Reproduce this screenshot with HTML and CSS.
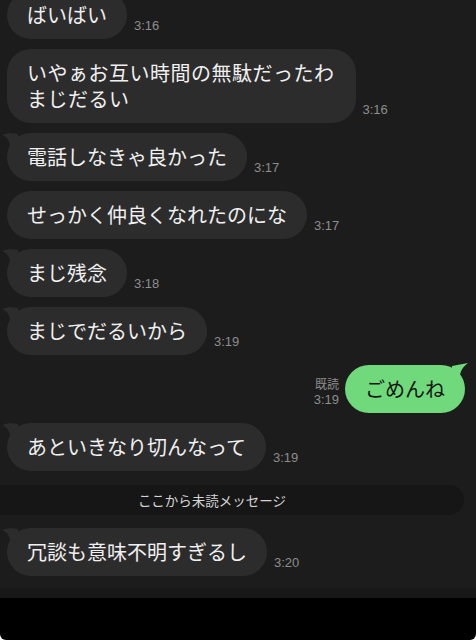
FILE: index.html
```html
<!DOCTYPE html>
<html lang="ja">
<head>
<meta charset="utf-8">
<title>トーク</title>
<link rel="stylesheet" href="styles.css">
</head>
<body>
<div class="screen">
  <div class="chat">
    <div class="row first">
      <div class="bubble">ばいばい</div>
      <div class="meta"><span class="time">3:16</span></div>
    </div>
    <div class="row">
      <div class="bubble wide"><span class="line">いやぁお互い時間の無駄だったわ</span><span class="line">まじだるい</span></div>
      <div class="meta"><span class="time">3:16</span></div>
    </div>
    <div class="row">
      <div class="bubble tail">電話しなきゃ良かった</div>
      <div class="meta"><span class="time">3:17</span></div>
    </div>
    <div class="row">
      <div class="bubble">せっかく仲良くなれたのにな</div>
      <div class="meta"><span class="time">3:17</span></div>
    </div>
    <div class="row">
      <div class="bubble tail">まじ残念</div>
      <div class="meta"><span class="time">3:18</span></div>
    </div>
    <div class="row">
      <div class="bubble tail">まじでだるいから</div>
      <div class="meta"><span class="time">3:19</span></div>
    </div>
    <div class="row mine">
      <div class="meta right"><span class="time">既読</span><span class="time">3:19</span></div>
      <div class="bubble green">ごめんね</div>
    </div>
    <div class="row">
      <div class="bubble tail">あといきなり切んなって</div>
      <div class="meta"><span class="time">3:19</span></div>
    </div>
    <div class="divider">ここから未読メッセージ</div>
    <div class="row">
      <div class="bubble tail">冗談も意味不明すぎるし</div>
      <div class="meta"><span class="time">3:20</span></div>
    </div>
  </div>
  <div class="band"></div>
</div>
</body>
</html>
```
FILE: styles.css
```css
html, body {
  margin: 0;
  padding: 0;
  background: #ffffff;
}

.screen {
  width: 476px;
  height: 640px;
  background: #000000;
  border-radius: 0 0 6px 6px;
  overflow: hidden;
  font-family: "Noto Sans CJK JP", "Liberation Sans", sans-serif;
}

.chat {
  height: 588px;
  background: #1c1c1c;
  overflow: hidden;
  display: flex;
  flex-direction: column;
  gap: 10px;
}

.band {
  height: 10px;
  background: #181818;
}

.row {
  display: flex;
  align-items: flex-end;
  gap: 7px;
  padding-left: 7px;
}

.row.first {
  margin-top: -9px;
}

.row.mine {
  justify-content: flex-end;
  padding-left: 0;
  padding-right: 11px;
  gap: 6px;
}

.bubble {
  position: relative;
  background: #2c2c2c;
  color: #f0f0f0;
  font-size: 20px;
  line-height: 26px;
  padding: 11px 20px;
  border-radius: 24px;
  white-space: nowrap;
}

.bubble.wide {
  display: flex;
  flex-direction: column;
  letter-spacing: 0.5px;
  padding-right: 21px;
}

.line {
  display: block;
  height: 26px;
  line-height: 26px;
}

.bubble.tail::before {
  content: "";
  position: absolute;
  left: -5px;
  top: 0;
  width: 16px;
  height: 14px;
  background: #2c2c2c;
  clip-path: path("M0 2 C5 0 11 0 16 1 L16 14 L8 14 C8 8 5 4 0 2 Z");
}

.bubble.green {
  background: #6fd97b;
  color: #161616;
}

.bubble.green::before {
  content: "";
  position: absolute;
  right: -3px;
  top: -2px;
  width: 16px;
  height: 14px;
  background: #6fd97b;
  clip-path: path("M16 0 C11 1 5 2 0 3 L0 14 L8 14 C8 8 11 4 16 0 Z");
}

.meta {
  display: flex;
  flex-direction: column;
  padding-bottom: 5px;
}

.meta.right {
  align-items: flex-end;
}

.time {
  font-family: "Liberation Sans", "Noto Sans CJK JP", sans-serif;
  font-size: 13px;
  line-height: 16px;
  color: #8d8d8d;
}

.meta.right .time:first-child {
  font-family: "Noto Sans CJK JP", sans-serif;
  font-size: 12px;
  line-height: 17px;
}

.divider {
  margin: 4px 0 3px;
  width: 464px;
  height: 30px;
  box-sizing: border-box;
  padding-right: 40px;
  background: #161616;
  border-radius: 0 15px 15px 0;
  color: #d4d4d4;
  font-size: 13.5px;
  line-height: 30px;
  text-align: center;
}
```
